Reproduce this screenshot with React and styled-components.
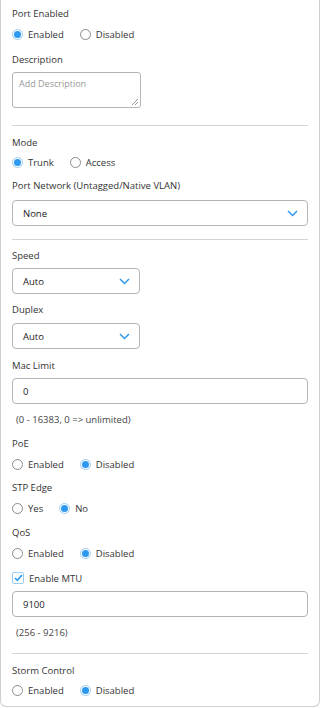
import React from "react";
import styled, { createGlobalStyle } from "styled-components";

const GlobalStyle = createGlobalStyle`
  html, body {
    margin: 0;
    padding: 0;
    background: #ffffff;
  }
  body {
    font-family: "Open Sans", "Noto Sans", sans-serif;
    color: #333333;
  }
`;

/* Panel has no top edge, it continues above the viewport */
const Panel = styled.div`
  width: 320px;
  box-sizing: border-box;
  border: 1px solid #cfcfcf;
  border-top: none;
  border-radius: 0 0 6px 6px;
  padding: 7px 11px 9px 11px;
  background: #fff;
`;

const Field = styled.div`
  margin-bottom: ${(p) => p.$gap ?? 10}px;
`;

const Label = styled.div`
  font-size: 9.5px;
  line-height: 14px;
  color: #333;
  margin-bottom: ${(p) => p.$gap ?? 5}px;
`;

const Hint = styled.div`
  font-size: 9.5px;
  line-height: 14px;
  color: #444;
  padding-left: 4px;
`;

const Divider = styled.hr`
  border: none;
  border-top: 1px solid #d4d4d4;
  margin: ${(p) => p.$top}px 0 ${(p) => p.$bottom}px 0;
`;

const RadioRow = styled.div`
  display: flex;
  align-items: center;
  gap: 16px;
  height: 14px;
`;

const Option = styled.label`
  display: flex;
  align-items: center;
  gap: 5px;
  font-size: 9.5px;
  color: #333;
`;

const Dot = styled.span`
  width: 9px;
  height: 9px;
  border-radius: 50%;
  border: 1px solid ${(p) => (p.$on ? "#9ccbf1" : "#8a8a8a")};
  display: flex;
  align-items: center;
  justify-content: center;
  background: #fff;
  &::after {
    content: "";
    width: 7px;
    height: 7px;
    border-radius: 50%;
    background: ${(p) => (p.$on ? "#2d98f0" : "transparent")};
  }
`;

const TextArea = styled.div`
  width: 129px;
  height: 36px;
  box-sizing: border-box;
  border: 1px solid #b5b5b5;
  border-radius: 3px;
  padding: 4px 6px;
  font-size: 9px;
  color: #999;
  position: relative;
  svg {
    position: absolute;
    right: 2px;
    bottom: 2px;
  }
`;

const Select = styled.div`
  width: ${(p) => p.$width || "100%"};
  height: 26px;
  box-sizing: border-box;
  border: 1px solid #b5b5b5;
  border-radius: 4px;
  display: flex;
  align-items: center;
  justify-content: space-between;
  padding: 0 9px 0 10px;
  font-size: 9.5px;
  color: #222;
`;

const Input = styled.div`
  width: 100%;
  height: 26px;
  box-sizing: border-box;
  border: 1px solid #b5b5b5;
  border-radius: 4px;
  display: flex;
  align-items: center;
  padding: 0 10px;
  font-size: 9.5px;
  color: #222;
`;

const CheckRow = styled.label`
  display: flex;
  align-items: center;
  gap: 5px;
  height: 14px;
  margin-bottom: 6px;
  font-size: 9.5px;
  color: #333;
`;

const Box = styled.span`
  width: 10px;
  height: 10px;
  border: 1px solid #9ccbf1;
  border-radius: 2px;
  display: flex;
  align-items: center;
  justify-content: center;
`;

const Chevron = () => (
  <svg width="11" height="7" viewBox="0 0 11 7">
    <path d="M1 1l4.5 4.5L10 1" fill="none" stroke="#2d98f0" strokeWidth="1.5" />
  </svg>
);

const Radios = ({ options, value }) => (
  <RadioRow>
    {options.map((o) => (
      <Option key={o}>
        <Dot $on={o === value} />
        {o}
      </Option>
    ))}
  </RadioRow>
);

export default function App() {
  return (
    <>
      <GlobalStyle />
      <Panel>
        <Field $gap={12}>
          <Label $gap={6}>Port Enabled</Label>
          <Radios options={["Enabled", "Disabled"]} value="Enabled" />
        </Field>
        <Field $gap={0}>
          <Label>Description</Label>
          <TextArea>
            Add Description
            <svg width="6" height="6" viewBox="0 0 6 6">
              <path d="M0 6L6 0M3 6L6 3" stroke="#777" strokeWidth="0.8" />
            </svg>
          </TextArea>
        </Field>
        <Divider $top={17} $bottom={10} />
        <Field>
          <Label>Mode</Label>
          <Radios options={["Trunk", "Access"]} value="Trunk" />
        </Field>
        <Field $gap={0}>
          <Label $gap={7}>Port Network (Untagged/Native VLAN)</Label>
          <Select>
            None
            <Chevron />
          </Select>
        </Field>
        <Divider $top={13} $bottom={9} />
        <Field $gap={9}>
          <Label>Speed</Label>
          <Select $width="128px">
            Auto
            <Chevron />
          </Select>
        </Field>
        <Field>
          <Label $gap={6}>Duplex</Label>
          <Select $width="128px">
            Auto
            <Chevron />
          </Select>
        </Field>
        <Field $gap={9}>
          <Label>Mac Limit</Label>
          <Input>0</Input>
        </Field>
        <Field>
          <Hint>(0 - 16383, 0 =&gt; unlimited)</Hint>
        </Field>
        <Field>
          <Label $gap={6}>PoE</Label>
          <Radios options={["Enabled", "Disabled"]} value="Disabled" />
        </Field>
        <Field $gap={11}>
          <Label $gap={6}>STP Edge</Label>
          <Radios options={["Yes", "No"]} value="No" />
        </Field>
        <Field $gap={11}>
          <Label $gap={6}>QoS</Label>
          <Radios options={["Enabled", "Disabled"]} value="Disabled" />
        </Field>
        <Field $gap={9}>
          <CheckRow>
            <Box>
              <svg width="9" height="8" viewBox="0 0 9 8">
                <path d="M1 4l2.3 2.3L8 1" fill="none" stroke="#2d98f0" strokeWidth="1.6" />
              </svg>
            </Box>
            Enable MTU
          </CheckRow>
          <Input>9100</Input>
        </Field>
        <Field $gap={0}>
          <Hint>(256 - 9216)</Hint>
        </Field>
        <Divider $top={13} $bottom={10} />
        <Field $gap={0}>
          <Label>Storm Control</Label>
          <Radios options={["Enabled", "Disabled"]} value="Disabled" />
        </Field>
      </Panel>
    </>
  );
}
